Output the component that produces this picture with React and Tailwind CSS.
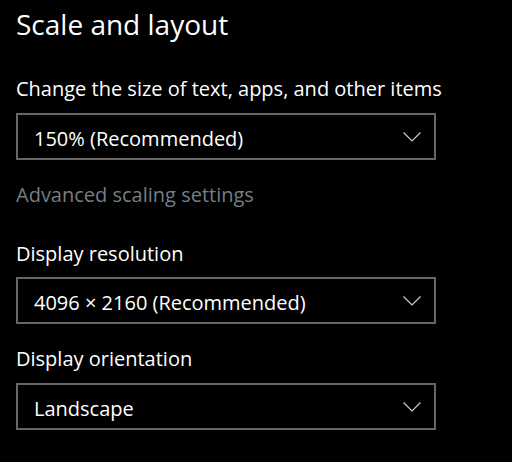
import React from "react";

function Chevron() {
  return (
    <svg width="18" height="10" viewBox="0 0 18 10" fill="none">
      <polyline points="0.5,0.5 9,9 17.5,0.5" stroke="#cccccc" strokeWidth="1.2" />
    </svg>
  );
}

function Dropdown({ value }) {
  return (
    <div className="flex h-[47px] w-[420px] items-center justify-between border-2 border-[#666666] pl-[16px] pr-[13px]">
      <span className="pt-[4px] text-[20px] leading-[26px] text-white">{value}</span>
      <Chevron />
    </div>
  );
}

export default function App() {
  return (
    <div
      className="min-h-[462px] w-[512px] bg-black pl-[16px] text-white"
      style={{ fontFamily: '"Open Sans", "Noto Sans", sans-serif' }}
    >
      <div className="flex flex-col">
        <div className="pt-[4px] text-[28px] leading-[40px]">Scale and layout</div>
        <div className="mt-[32px] text-[20px] leading-[26px]">Change the size of text, apps, and other items</div>
        <div className="mt-[11px]">
          <Dropdown value="150% (Recommended)" />
        </div>
        <div className="mt-[22px] text-[20px] leading-[26px] text-[#767e84]">Advanced scaling settings</div>
        <div className="mt-[33px] text-[20px] leading-[26px]">Display resolution</div>
        <div className="mt-[10px]">
          <Dropdown value="4096 × 2160 (Recommended)" />
        </div>
        <div className="mt-[22px] text-[20px] leading-[26px]">Display orientation</div>
        <div className="mt-[11px]">
          <Dropdown value="Landscape" />
        </div>
      </div>
    </div>
  );
}
